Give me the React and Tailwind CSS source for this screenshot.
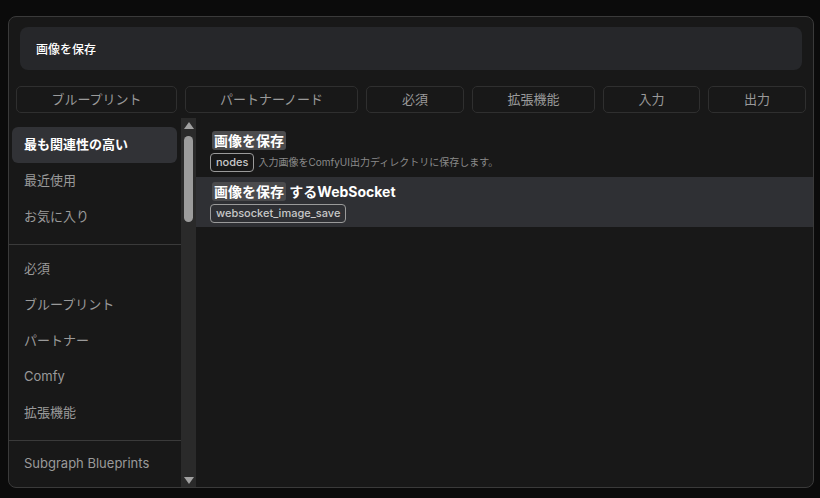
import React from 'react';

const font = { fontFamily: 'Inter, "Noto Sans CJK JP", "Noto Sans", sans-serif' };

const filters = [
  { label: 'ブループリント', w: 'w-[161px]' },
  { label: 'パートナーノード', w: 'w-[173px]' },
  { label: '必須', w: 'w-[98px]' },
  { label: '拡張機能', w: 'w-[123px]' },
  { label: '入力', w: 'w-[97px]' },
  { label: '出力', w: 'w-[98px]' },
];

const SideItem = ({ children, active }) => (
  <div
    className={`h-[36px] mx-[3px] mr-[4px] px-[12px] flex items-center rounded-[6px] text-[13px] ${
      active ? 'bg-[#313236] text-white font-bold' : 'text-[#9a9a9a]'
    }`}
  >
    {children}
  </div>
);

const Mark = ({ children }) => (
  <span className="bg-[#4b4b4d] rounded-[3px] px-[2px] py-[1px]">{children}</span>
);

const Tag = ({ children }) => (
  <span className="inline-flex items-center h-[19px] px-[5px] border border-[#9a9a9a] rounded-[4px] text-[11px] font-medium text-[#c8c8c8]">
    {children}
  </span>
);

export default function App() {
  return (
    <div className="w-[820px] h-[498px] bg-[#0b0b0b] pt-[16px] pl-[8px] overflow-hidden" style={font}>
      <div className="w-[806px] h-[472px] border border-[#3a3a3a] rounded-[8px] bg-[#181818] flex flex-col overflow-hidden">
        <div className="mt-[10px] ml-[11px] w-[782px] h-[43px] rounded-[8px] bg-[#26272a] flex items-center pt-[3px] px-[16px] text-[12px] font-medium text-white">
          画像を保存
        </div>
        <div className="flex gap-[8px] ml-[7px] mt-[16px] h-[27px]">
          {filters.map((f) => (
            <div
              key={f.label}
              className={`${f.w} h-[27px] border border-[#2f2f2f] rounded-[5px] flex items-center justify-center text-[13px] text-[#9a9a9a]`}
            >
              {f.label}
            </div>
          ))}
        </div>
        <div className="flex flex-1 mt-[5px] min-h-0">
          <div className="w-[172px] flex flex-col pt-[9px]">
            <SideItem active>最も関連性の高い</SideItem>
            <SideItem>最近使用</SideItem>
            <SideItem>お気に入り</SideItem>
            <div className="mt-[9px] border-t border-[#3a3a3a]" />
            <div className="mt-[6px]">
              <SideItem>必須</SideItem>
              <SideItem>ブループリント</SideItem>
              <SideItem>パートナー</SideItem>
              <SideItem>Comfy</SideItem>
              <SideItem>拡張機能</SideItem>
            </div>
            <div className="mt-[9px] border-t border-[#3a3a3a]" />
            <div className="mt-[5px]">
              <SideItem>Subgraph Blueprints</SideItem>
            </div>
          </div>
          <div className="w-[15px] bg-[#2a2a2a] flex flex-col items-center pt-[4px] pb-[3px]">
            <svg width="10" height="7" viewBox="0 0 10 7">
              <polygon points="5,0 10,7 0,7" fill="#a0a0a0" />
            </svg>
            <div className="mt-[7px] w-[9px] h-[86px] rounded-full bg-[#9c9c9c]" />
            <div className="flex-1" />
            <svg width="10" height="7" viewBox="0 0 10 7">
              <polygon points="0,0 10,0 5,7" fill="#a0a0a0" />
            </svg>
          </div>
          <div className="flex-1 pt-[9px]">
            <div className="h-[50px] pl-[16px] pt-[5px]">
              <div className="text-[14px] font-bold text-white leading-[18px]">
                <Mark>画像を保存</Mark>
              </div>
              <div className="flex items-center gap-[4px] mt-[3px] -ml-[2px]">
                <Tag>nodes</Tag>
                <span className="text-[10px] text-[#8a8a8a]">入力画像をComfyUI出力ディレクトリに保存します。</span>
              </div>
            </div>
            <div className="h-[50px] pl-[16px] pt-[6px] bg-[#2f3034]">
              <div className="text-[14px] font-bold text-white leading-[18px]">
                <Mark>画像を保存</Mark> するWebSocket
              </div>
              <div className="flex items-center mt-[3px] -ml-[2px]">
                <Tag>websocket_image_save</Tag>
              </div>
            </div>
          </div>
        </div>
      </div>
    </div>
  );
}
